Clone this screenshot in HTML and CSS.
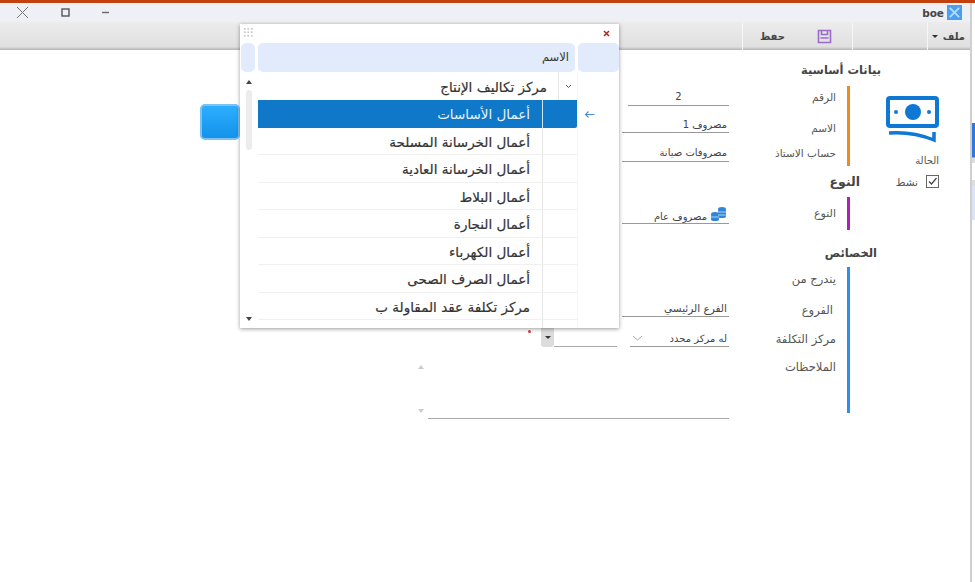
FILE: index.html
```html
<!DOCTYPE html>
<html lang="ar">
<head>
    <meta charset="UTF-8">
    <meta name="viewport" content="width=device-width, initial-scale=1.0">
    <title>boe</title>
    <link rel="stylesheet" href="styles.css">
</head>
<body>
    <div class="desktop">
        <div class="window">
            <div class="title-bar">
                <div class="win-controls">
                    <svg width="13" height="13" viewBox="0 0 13 13"><path d="M1 1l11 11M12 1L1 12" stroke="#777" stroke-width="1" fill="none"/></svg>
                    <svg class="win-max" width="9" height="9" viewBox="0 0 9 9"><rect x="1" y="1" width="7" height="7" stroke="#555" stroke-width="1.4" fill="none"/></svg>
                    <svg class="win-min" width="9" height="3" viewBox="0 0 9 3"><path d="M1 1.5h7" stroke="#666" stroke-width="1.4"/></svg>
                </div>
                <div class="app-name">
                    <span>boe</span>
                    <svg width="15" height="15" viewBox="0 0 16 16"><rect width="16" height="16" fill="#4a9ff0"/><path d="M3 3l10 10M13 3L3 13" stroke="#bcd9f5" stroke-width="2"/></svg>
                </div>
            </div>

            <div class="toolbar">
                <button class="tool save-btn">
                    <span>حفظ</span>
                    <svg width="15" height="15" viewBox="0 0 15 15"><path d="M1.500 1.500h12v12h-12zM4.500 1.500v4h6v-4M3.500 9h8" stroke="#9a6cc8" stroke-width="1.6" fill="none"/></svg>
                </button>
                <div class="tool-spacer"></div>
                <button class="tool file-btn"><i class="caret"></i><span>ملف</span></button>
            </div>

            <div class="content">
                <div class="left-pane">
                    <div class="blue-btn"></div>
                </div>

                <div class="form-fields">
                    <div class="field field-num">2</div>
                    <div class="field field-name">مصروف 1</div>
                    <div class="field field-account">مصروفات صيانة</div>
                    <div class="field field-type">
                        <span>مصروف عام</span>
                        <svg width="17" height="16" viewBox="0 0 17 16"><g fill="#2f86d8"><ellipse cx="12" cy="3" rx="4" ry="2"/><rect x="8" y="3" width="8" height="9" rx="2"/><ellipse cx="5" cy="8" rx="4" ry="2"/><rect x="1" y="8" width="8" height="7" rx="2"/></g><path d="M8 6h8M8 9h8M1 11h8" stroke="#cfe4f8" stroke-width=".8"/></svg>
                    </div>
                    <div class="field field-branch">الفرع الرئيسي</div>
                    <div class="cost-row">
                        <div class="cost-left">
                            <i class="req-dot"></i>
                            <div class="drop-btn"><i class="caret"></i></div>
                            <div class="cost-value"></div>
                        </div>
                        <div class="field cost-select">
                            <span>له مركز محدد</span>
                            <svg width="11" height="6" viewBox="0 0 11 6"><path d="M1 1l4.500 4L10 1" stroke="#aaa" fill="none"/></svg>
                        </div>
                    </div>
                    <div class="notes">
                        <div class="notes-arrows"><i class="arrow-up"></i><i class="arrow-down"></i></div>
                        <div class="notes-box"></div>
                    </div>
                </div>

                <div class="labels">
                    <h3 class="head head-basic">بيانات أساسية</h3>
                    <div class="group group-basic">
                        <div class="group-labels">
                            <span>الرقم</span>
                            <span>الاسم</span>
                            <span>حساب الاستاذ</span>
                        </div>
                    </div>
                    <h3 class="head head-type">النوع</h3>
                    <div class="group group-type">
                        <div class="group-labels"><span>النوع</span></div>
                    </div>
                    <h3 class="head head-props">الخصائص</h3>
                    <div class="group group-props">
                        <div class="group-labels">
                            <span>يندرج من</span>
                            <span>الفروع</span>
                            <span>مركز التكلفة</span>
                            <span>الملاحظات</span>
                        </div>
                    </div>
                </div>

                <div class="side">
                    <svg class="money" width="53" height="48" viewBox="0 0 53 48">
                        <rect x="2" y="3" width="49" height="28" rx="2" fill="none" stroke="#0f78d4" stroke-width="4"/>
                        <circle cx="27" cy="17" r="8" fill="#0f78d4"/>
                        <circle cx="10" cy="17" r="2" fill="#0f78d4"/>
                        <circle cx="43" cy="17" r="2" fill="#0f78d4"/>
                        <path d="M3 38c14-1 30 1 45 7V37" fill="none" stroke="#0f78d4" stroke-width="3.500"/>
                    </svg>
                    <div class="status-label">الحالة</div>
                    <label class="status">
                        <span>نشط</span>
                        <svg width="13" height="13" viewBox="0 0 13 13"><rect x=".5" y=".5" width="12" height="12" fill="#fff" stroke="#666"/><path d="M3 6.500l2.500 2.500L10.500 3" stroke="#444" stroke-width="1.2" fill="none"/></svg>
                    </label>
                </div>
            </div>
        </div>

        <div class="edge-strip"></div>

        <div class="popup">
            <div class="popup-top">
                <div class="grip"></div>
                <svg width="7" height="7" viewBox="0 0 7 7"><path d="M1 1l5 5M6 1L1 6" stroke="#b3261e" stroke-width="1.5"/></svg>
            </div>
            <div class="popup-head">
                <div class="head-cell cell-scroll"></div>
                <div class="head-cell cell-name">الاسم</div>
                <div class="head-cell cell-mark"></div>
            </div>
            <div class="popup-body">
                <div class="scroll-col">
                    <i class="arrow-up dark"></i>
                    <div class="scroll-track"></div>
                    <i class="arrow-down dark"></i>
                </div>
                <div class="tree">
                    <div class="tree-row root">
                        <div class="row-text">مركز تكاليف الإنتاج</div>
                        <div class="row-expander"><svg width="7" height="5" viewBox="0 0 7 5"><path d="M1 1l2.500 2.500L6 1" stroke="#555" fill="none"/></svg></div>
                    </div>
                    <div class="tree-row active">
                        <div class="row-text">أعمال الأساسات</div>
                        <div class="row-expander"></div>
                    </div>
                    <div class="tree-row"><div class="row-text">أعمال الخرسانة المسلحة</div><div class="row-expander"></div></div>
                    <div class="tree-row"><div class="row-text">أعمال الخرسانة العادية</div><div class="row-expander"></div></div>
                    <div class="tree-row"><div class="row-text">أعمال البلاط</div><div class="row-expander"></div></div>
                    <div class="tree-row"><div class="row-text">أعمال النجارة</div><div class="row-expander"></div></div>
                    <div class="tree-row"><div class="row-text">أعمال الكهرباء</div><div class="row-expander"></div></div>
                    <div class="tree-row"><div class="row-text">أعمال الصرف الصحى</div><div class="row-expander"></div></div>
                    <div class="tree-row"><div class="row-text">مركز تكلفة عقد المقاولة ب</div><div class="row-expander"></div></div>
                    <div class="tree-row"><div class="row-text"></div><div class="row-expander"></div></div>
                </div>
                <div class="mark-col">
                    <svg width="11" height="9" viewBox="0 0 11 9"><path d="M10.500 4.500H1.500M4.500 1.500l-3 3 3 3" stroke="#4a90d9" stroke-width="1.100" fill="none"/></svg>
                </div>
            </div>
        </div>
    </div>
</body>
</html>
```

FILE: styles.css
```css
html, body {
    margin: 0;
    height: 100%;
    overflow: hidden;
}
body {
    font-family: "DejaVu Sans", "Noto Sans", sans-serif;
    color: #444;
    background: #fff;
}
h3 {
    margin: 0;
}
i {
    display: block;
}
.desktop {
    position: relative;
    width: 975px;
    height: 582px;
    overflow: hidden;
    border-top: 3px solid #c2410f;
    box-sizing: border-box;
    display: flex;
}
.window {
    width: 970px;
    display: flex;
    flex-direction: column;
}
/* bit of the window behind, showing on the right */
.edge-strip {
    width: 5px;
    background: linear-gradient(to bottom, #fff 0, #fff 120px, #2e78de 120px, #2e78de 154px, #ddd 155px, #ddd 160px, #fff 160px, #fff 177px, #ddd 177px, #ddd 183px, #dbe5f6 183px, #dbe5f6 217px, #fff 217px);
    border-left: 2px solid #cfcfcf;
    box-sizing: border-box;
}

/* title and toolbar */
.title-bar {
    height: 19px;
    background: #eef0f5;
    display: flex;
    justify-content: space-between;
    align-items: center;
    padding: 0 8px 0 16px;
}
.win-controls {
    display: flex;
    align-items: center;
}
.win-max {
    margin-left: 32px;
}
.win-min {
    margin-left: 31px;
}
.app-name {
    display: flex;
    align-items: center;
    gap: 3px;
    font-size: 10.500px;
    font-weight: bold;
    color: #444;
}
.toolbar {
    height: 28px;
    background: linear-gradient(to bottom, #ececec, #e0e0e0 88%, #b4b4b4);
    display: flex;
    justify-content: flex-end;
    align-items: stretch;
}
.tool {
    border: none;
    background: none;
    padding: 0;
    font: bold 10px "DejaVu Sans", sans-serif;
    color: #444;
    display: flex;
    align-items: center;
    border-left: 1px solid #f6f6f6;
}
.save-btn {
    width: 110px;
    justify-content: flex-end;
    gap: 32px;
    padding-right: 20px;
    box-sizing: border-box;
}
.tool-spacer {
    width: 75px;
    border-left: 1px solid #f6f6f6;
    box-sizing: border-box;
}
.file-btn {
    width: 43px;
    box-sizing: border-box;
    gap: 5px;
    justify-content: flex-end;
    padding-right: 5px;
}
.caret {
    width: 0;
    height: 0;
    border-left: 3px solid transparent;
    border-right: 3px solid transparent;
    border-top: 3px solid #333;
}

/* main form */
.content {
    flex: 1;
    display: flex;
    background: #fff;
}
.left-pane {
    width: 200px;
    padding-top: 54px;
    box-sizing: border-box;
    display: flex;
    justify-content: flex-end;
}
.blue-btn {
    width: 40px;
    height: 36px;
    margin-right: -40px;
    margin-left: 1px;
    box-sizing: border-box;
    flex-shrink: 0;
    border: 2px solid #7cc0f4;
    border-radius: 5px;
    background: linear-gradient(to bottom, #2caeff, #1493ea);
}
.form-fields {
    width: 529px;
    padding-top: 36px;
    padding-left: 216px;
    box-sizing: border-box;
    display: flex;
    flex-direction: column;
    flex-shrink: 0;
}
.field {
    font-size: 10px;
    color: #444;
    border-bottom: 1px solid #999;
    text-align: right;
    padding-right: 2px;
    box-sizing: border-box;
}
.field-num {
    height: 20px;
    margin-left: 212px;
    text-align: center;
    line-height: 22px;
    padding-right: 0;
}
.field-name {
    height: 27px;
    margin-left: 206px;
    line-height: 37px;
}
.field-account {
    height: 29px;
    margin-left: 206px;
    line-height: 40px;
}
.field-type {
    height: 62px;
    margin-left: 206px;
    display: flex;
    justify-content: flex-end;
    align-items: flex-end;
    gap: 3px;
    padding-bottom: 1px;
}
.field-branch {
    height: 93px;
    margin-left: 206px;
    display: flex;
    justify-content: flex-end;
    align-items: flex-end;
    padding-bottom: 2px;
    font-size: 10.500px;
}
.cost-row {
    height: 30px;
    display: flex;
    align-items: flex-end;
    gap: 13px;
    margin-left: 125px;
}
.cost-left {
    position: relative;
    width: 76px;
    display: flex;
    align-items: flex-end;
    height: 14px;
}
.req-dot {
    position: absolute;
    left: -13px;
    top: -3px;
    width: 3px;
    height: 3px;
    border-radius: 50%;
    background: #e53935;
}
.drop-btn {
    width: 13px;
    height: 19px;
    flex-shrink: 0;
    background: #dcdcdc;
    border-radius: 0 0 3px 3px;
    display: flex;
    align-items: center;
    justify-content: center;
}
.cost-value {
    flex: 1;
    border-bottom: 1px solid #aaa;
}
.cost-select {
    flex: 1;
    height: 17px;
    display: flex;
    justify-content: space-between;
    align-items: center;
    flex-direction: row-reverse;
    padding: 0 2px;
}
.notes {
    margin-top: 1px;
    height: 71px;
    display: flex;
}
.notes-arrows {
    width: 12px;
    display: flex;
    flex-direction: column;
    justify-content: space-between;
    padding: 17px 0 6px;
    box-sizing: border-box;
}
.notes-box {
    flex: 1;
    border-bottom: 1px solid #aaa;
}
.arrow-up, .arrow-down {
    width: 0;
    height: 0;
    border-left: 3px solid transparent;
    border-right: 3px solid transparent;
    margin-left: 2px;
}
.arrow-up {
    border-bottom: 4px solid #ccc;
}
.arrow-down {
    border-top: 4px solid #ccc;
}
.arrow-up.dark {
    border-bottom-color: #444;
}
.arrow-down.dark {
    border-top-color: #444;
}

/* labels with coloured bars */
.labels {
    width: 122px;
    flex-shrink: 0;
    margin-left: -1px;
    padding-top: 13px;
    box-sizing: border-box;
    display: flex;
    flex-direction: column;
    align-items: flex-end;
}
.head {
    font-size: 11.500px;
    font-weight: bold;
    color: #444;
    line-height: 14px;
    white-space: nowrap;
}
.head-basic {
    margin-right: -31px;
}
.head-type {
    margin-top: 9px;
    margin-right: -10px;
    font-size: 12.500px;
}
.head-props {
    margin-top: 16px;
    margin-right: -27px;
}
.group {
    width: 100%;
    box-sizing: border-box;
    border-right: 3px solid;
}
.group-basic {
    margin-top: 9px;
    height: 80px;
    border-color: #f08a1c;
}
.group-type {
    margin-top: 8px;
    height: 33px;
    border-color: #b01fb8;
}
.group-props {
    margin-top: 7px;
    height: 146px;
    border-color: #2e8fef;
}
.group-labels {
    display: flex;
    flex-direction: column;
    align-items: flex-end;
    padding-right: 11px;
    font-size: 10.500px;
    line-height: 12px;
    color: #555;
    white-space: nowrap;
}
.group-basic .group-labels {
    padding-top: 5px;
}
.group-basic span:nth-child(2) {
    margin-top: 19px;
}
.group-basic span:nth-child(3) {
    margin-top: 13px;
}
.group-type .group-labels {
    padding-top: 11px;
    font-size: 11px;
}
.group-props .group-labels {
    padding-top: 6px;
    font-size: 11.500px;
}
.group-props span:nth-child(2) {
    margin-top: 19px;
    margin-right: 3px;
}
.group-props span:nth-child(3) {
    margin-top: 17px;
}
.group-props span:nth-child(4) {
    margin-top: 16px;
}
.side {
    flex: 1;
    padding-top: 45px;
    padding-right: 31px;
    display: flex;
    flex-direction: column;
    align-items: flex-end;
}
.status-label {
    font-size: 10px;
    line-height: 12px;
    color: #555;
    margin-top: 12px;
}
.status {
    display: flex;
    align-items: center;
    gap: 8px;
    font-size: 10.500px;
    color: #555;
    margin-top: 8px;
}

/* popup over the form */
.popup {
    position: absolute;
    left: 240px;
    top: 21px;
    width: 379px;
    height: 304px;
    background: #fff;
    box-shadow: 0 1px 4px rgba(0, 0, 0, 0.4);
    display: flex;
    flex-direction: column;
    font-size: 13.500px;
}
.popup-top {
    height: 19px;
    display: flex;
    justify-content: space-between;
    align-items: center;
    padding: 0 9px 0 3px;
}
.grip {
    width: 11px;
    height: 10px;
    margin-top: -3px;
    background-image: radial-gradient(#c8c8c8 0.8px, transparent 1px);
    background-size: 3.500px 3.500px;
}
.popup-head {
    display: flex;
    gap: 3px;
    height: 29px;
}
.head-cell {
    background: #e1ebfb;
    border-radius: 5px;
}
.cell-scroll {
    width: 14px;
    margin-left: 1px;
}
.cell-name {
    width: 317px;
    text-align: right;
    padding-right: 6px;
    box-sizing: border-box;
    font-size: 11.500px;
    line-height: 28px;
    color: #333;
}
.cell-mark {
    width: 41px;
}
.popup-body {
    flex: 1;
    display: flex;
    overflow: hidden;
}
.scroll-col {
    width: 18px;
    display: flex;
    flex-direction: column;
    align-items: center;
    padding: 8px 0 4px;
    box-sizing: border-box;
}
.scroll-col .arrow-up, .scroll-col .arrow-down {
    margin-left: 0;
}
.scroll-track {
    width: 6px;
    height: 60px;
    margin-top: 6px;
    margin-right: 1px;
    border-radius: 3px;
    background: #ececec;
}
.scroll-col .arrow-down {
    margin-top: auto;
    margin-bottom: 3px;
}
.tree {
    width: 319px;
    flex-shrink: 0;
}
.tree-row {
    display: flex;
    height: 27.500px;
    box-sizing: border-box;
    border-bottom: 1px solid #f0f0f0;
}
.tree-row.root {
    height: 28px;
    border-bottom: none;
}
.row-text {
    width: 284px;
    flex-shrink: 0;
    text-align: right;
    padding-right: 12px;
    box-sizing: border-box;
    line-height: 29px;
    color: #333;
    -webkit-text-stroke: 0.2px #333;
    white-space: nowrap;
}
.row-expander {
    flex: 1;
    border-left: 1px solid #e6e6e6;
    display: flex;
    align-items: center;
    justify-content: center;
}
.tree-row.root .row-text {
    width: 300px;
    padding-right: 11px;
    line-height: 30px;
}
.tree-row.active {
    background: #0f78c8;
    border-bottom: none;
    border-radius: 0 0 2px 0;
}
.tree-row.active .row-text {
    color: #e8f3fc;
    -webkit-text-stroke: 0;
}
.tree-row.active .row-expander {
    border-left: 1px solid #cfe4f6;
}
.mark-col {
    flex: 1;
    padding: 38px 0 0 6px;
    border-left: 1px solid #f4f4f4;
    box-sizing: border-box;
}
.mark-col svg {
    display: block;
}
```
